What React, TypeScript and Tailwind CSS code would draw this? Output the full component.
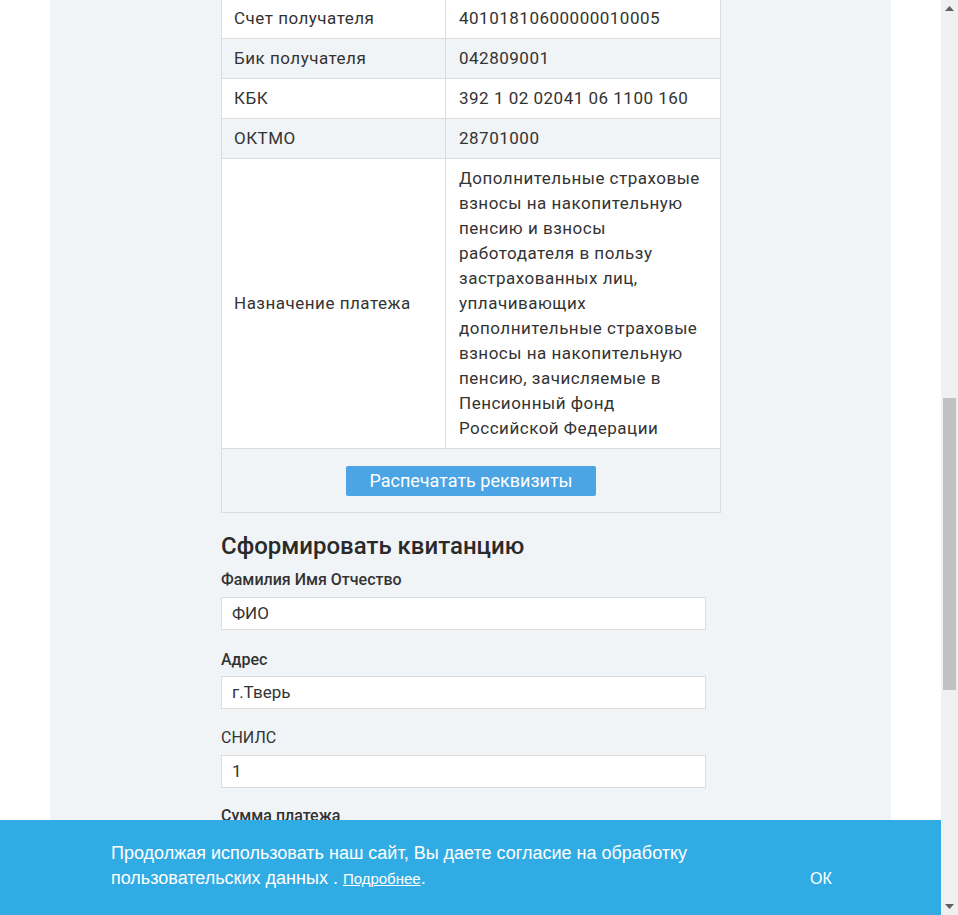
import React from "react";

const rows: [string, string][] = [
  ["Счет получателя", "40101810600000010005"],
  ["Бик получателя", "042809001"],
  ["КБК", "392 1 02 02041 06 1100 160"],
  ["ОКТМО", "28701000"],
];

const purposeLines = [
  "Дополнительные страховые",
  "взносы на накопительную",
  "пенсию и взносы",
  "работодателя в пользу",
  "застрахованных лиц,",
  "уплачивающих",
  "дополнительные страховые",
  "взносы на накопительную",
  "пенсию, зачисляемые в",
  "Пенсионный фонд",
  "Российской Федерации",
];

export default function App() {
  return (
    <div
      className="relative w-[958px] h-[915px] overflow-hidden flex bg-white text-[#333]"
      style={{ fontFamily: "Roboto, 'Liberation Sans', sans-serif" }}
    >
      <div className="w-[50px] shrink-0 bg-white" />
      <div className="w-[841px] shrink-0 bg-[#f0f4f7] h-full">
        <div className="ml-[171px] mt-[-2px]">
          <table className="w-[500px] border-collapse border border-[#dcdcdc] text-[17px] leading-[25px] tracking-[0.5px]">
            <tbody>
              {rows.map(([k, v], i) => (
                <tr key={k} className={i % 2 === 0 ? "bg-white" : "bg-[#f0f4f7]"}>
                  <td className="w-[224px] border border-[#dcdcdc] px-[12px] py-[7px] align-middle">{k}</td>
                  <td className="border border-[#dcdcdc] pl-[13px] pr-[12px] py-[7px] align-middle">{v}</td>
                </tr>
              ))}
              <tr className="bg-white">
                <td className="w-[224px] border border-[#dcdcdc] px-[12px] py-[7px] align-middle">Назначение платежа</td>
                <td className="border border-[#dcdcdc] pl-[13px] pr-[8px] py-[7px] align-middle whitespace-nowrap">
                  {purposeLines.map((l, i) => (
                    <div key={i}>{l}</div>
                  ))}
                </td>
              </tr>
              <tr className="bg-[#f0f4f7]">
                <td colSpan={2} className="border border-[#dcdcdc] h-[64px] text-center align-middle tracking-normal">
                  <button className="w-[250px] h-[30px] rounded-[2px] bg-[#4ba4e4] text-white text-[18px] leading-[30px] font-normal">
                    Распечатать реквизиты
                  </button>
                </td>
              </tr>
            </tbody>
          </table>

          <h2 className="mt-[18px] text-[24px] leading-[30px] font-medium text-[#2a2a2a]">Сформировать квитанцию</h2>

          <div className="flex flex-col">
            <label className="mt-[9px] text-[16px] leading-[20px] font-medium text-[#333]">Фамилия Имя Отчество</label>
            <div className="mt-[7px] w-[485px] h-[33px] bg-white border border-[#dcdcdc] pl-[10px] text-[17px] leading-[31px]">ФИО</div>

            <label className="mt-[20px] text-[16px] leading-[20px] font-medium text-[#333]">Адрес</label>
            <div className="mt-[6px] w-[485px] h-[33px] bg-white border border-[#dcdcdc] pl-[10px] text-[17px] leading-[31px]">г.Тверь</div>

            <label className="mt-[19px] text-[16px] leading-[20px] text-[#333]">СНИЛС</label>
            <div className="mt-[7px] w-[485px] h-[33px] bg-white border border-[#dcdcdc] pl-[10px] text-[17px] leading-[31px]">1</div>

            <label className="mt-[18px] text-[16px] leading-[20px] font-medium text-[#333]">Сумма платежа</label>
          </div>
        </div>
      </div>
      <div className="w-[50px] shrink-0 bg-white" />
      <div className="w-[17px] shrink-0 bg-[#f0f0f0] flex flex-col items-center">
        <div className="h-[17px] w-full flex items-center justify-center">
          <svg width="9" height="5" viewBox="0 0 9 5"><path d="M0 5 L4.5 0 L9 5 Z" fill="#606060" /></svg>
        </div>
        <div className="mt-[381px] w-[13px] h-[292px] bg-[#c1c1c1]" />
        <div className="flex-1" />
        <div className="h-[17px] w-full flex items-center justify-center">
          <svg width="9" height="5" viewBox="0 0 9 5"><path d="M0 0 L4.5 5 L9 0 Z" fill="#606060" /></svg>
        </div>
      </div>

      <div
        className="absolute left-0 bottom-0 w-[941px] h-[95px] bg-[#31abe4] text-white flex items-center"
        style={{ fontFamily: "'Liberation Sans', Arial, sans-serif" }}
      >
        <div className="ml-[111px] w-[640px] text-[18px] leading-[25px] -mt-[3px]">
          <div>Продолжая использовать наш сайт, Вы даете согласие на обработку</div>
          <div>
            пользовательских данных . <span className="underline text-[15px]">Подробнее</span>.
          </div>
        </div>
        <div className="ml-[59px] mt-[22px] text-[16px]">ОК</div>
      </div>
    </div>
  );
}
